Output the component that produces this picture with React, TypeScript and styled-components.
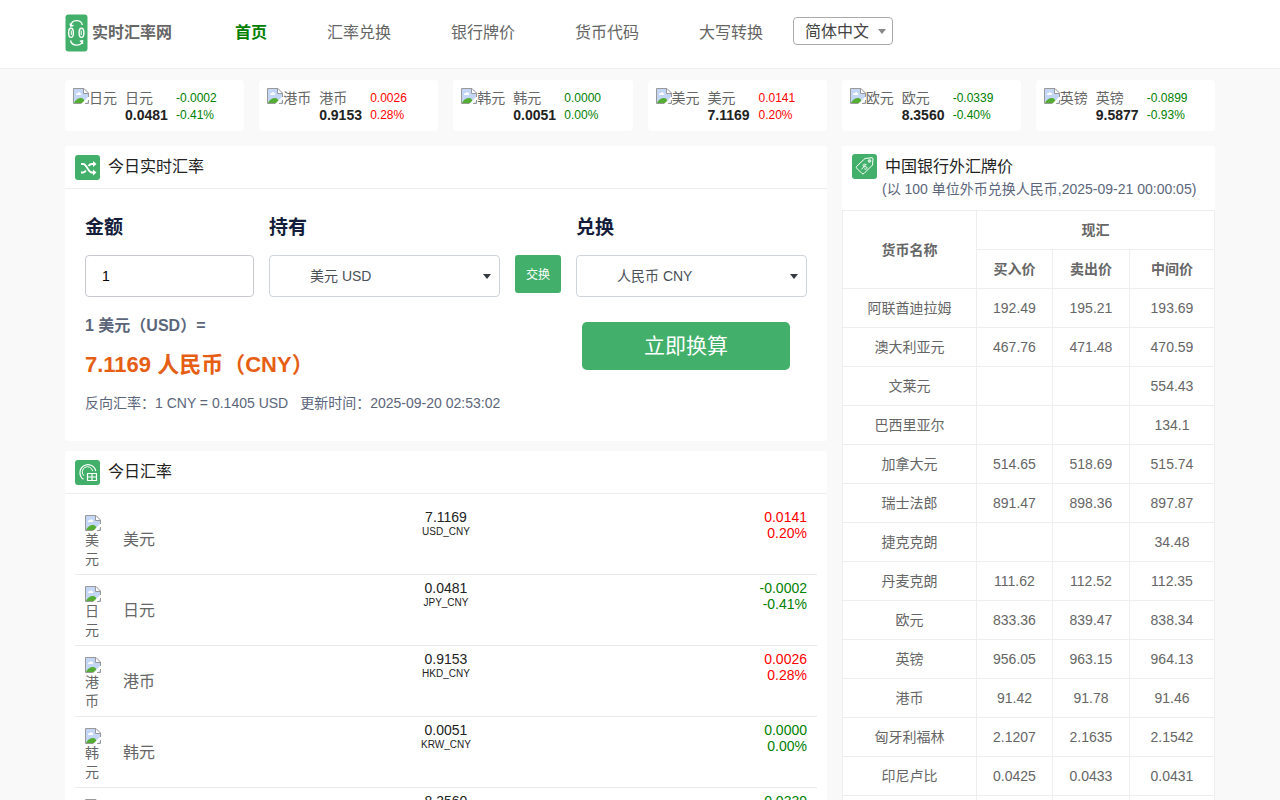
import React from "react";
import styled, { createGlobalStyle } from "styled-components";

const GREEN = "#42b06a";

const GlobalStyle = createGlobalStyle`
  *, *::before, *::after { box-sizing: border-box; }
  html { scrollbar-width: none; }
  body {
    margin: 0;
    background: #f9f9f9;
    color: #666;
    font: 14px/20px "Liberation Sans", "Noto Sans CJK SC", sans-serif;
  }
  button, input, select { font-family: inherit; }
`;

const Container = styled.div`
  max-width: 1180px;
  margin: 0 auto;
  padding: 0 15px;
`;

const Header = styled.header`
  background: #fff;
  border-bottom: 1px solid #eee;
`;

const HeaderRow = styled(Container)`
  display: flex;
  align-items: center;
  height: 68px;
  padding-bottom: 6px;
`;

const Logo = styled.a`
  display: flex;
  align-items: center;
  gap: 4px;
  width: 140px;
  padding-top: 4px;
  color: #666;
  font-size: 16px;
  font-weight: 700;
  text-decoration: none;
  white-space: nowrap;
`;

const Nav = styled.nav`
  display: flex;
  gap: 60px;
  padding: 4px 30px 0;
`;

const NavLink = styled.a<{ $active?: boolean }>`
  color: ${(p) => (p.$active ? "green" : "#666")};
  font-size: 16px;
  font-weight: ${(p) => (p.$active ? 700 : 400)};
  line-height: 24px;
  text-decoration: none;
  white-space: nowrap;
`;

const SelectWrap = styled.div<{ $inset: number; $color: string }>`
  position: relative;
  &::after {
    content: "";
    position: absolute;
    top: calc(50% - 2px);
    right: ${(p) => p.$inset}px;
    border: 4px solid transparent;
    border-top: 5px solid ${(p) => p.$color};
    border-bottom: 0;
    pointer-events: none;
  }
`;

const LanguageSelect = styled.select`
  display: block;
  appearance: none;
  width: 100px;
  height: 28px;
  padding: 0 20px 0 11px;
  border: 1px solid #aaa;
  border-radius: 4px;
  background: #fff;
  color: #444;
  font-size: 16px;
`;

const Tickers = styled.section`
  display: grid;
  grid-template-columns: repeat(6, minmax(0, 1fr));
  gap: 15px;
  margin: 11px 0 15px;
`;

const Ticker = styled.article`
  display: flex;
  align-items: flex-start;
  padding: 8px 8px 7px;
  border-radius: 4px;
  background: #fff;
  line-height: 17px;
  white-space: nowrap;
`;

const TickerFlag = styled.div`
  display: flex;
  width: 52px;
  line-height: 20px;
`;

const TickerRate = styled.div`
  display: grid;
  width: 51px;
  padding-top: 2px;
  strong { color: #222; }
`;

const Change = styled.div<{ $up: boolean; $small?: boolean }>`
  display: grid;
  padding-top: ${(p) => (p.$small ? 2 : 0)}px;
  color: ${(p) => (p.$up ? "red" : "green")};
  font-size: ${(p) => (p.$small ? 12 : 14)}px;
  line-height: ${(p) => (p.$small ? 17 : 16)}px;
  text-align: ${(p) => (p.$small ? "left" : "right")};
`;

const Columns = styled.main`
  display: grid;
  grid-template-columns: minmax(0, 1fr) 373px;
  gap: 15px;
  align-items: start;
`;

const MainColumn = styled.div`
  display: grid;
  gap: 10px;
`;

const Panel = styled.section`
  border-radius: 3px;
  background: #fff;
`;

const PanelHead = styled.header<{ $line?: boolean }>`
  display: flex;
  align-items: center;
  gap: 8px;
  height: ${(p) => (p.$line ? 43 : 41)}px;
  padding: 0 10px;
  border-bottom: ${(p) => (p.$line ? "1px solid #eee" : "0")};
`;

const PanelIcon = styled.span`
  display: flex;
  width: 25px;
  height: 25px;
  border-radius: 3px;
  background: ${GREEN};
`;

const PanelTitle = styled.h2`
  margin: 0;
  color: #222;
  font-size: 16px;
  font-weight: 400;
`;

const Form = styled.form`
  padding: 24px 20px 28px;
`;

const Fields = styled.div`
  display: grid;
  grid-template-columns: minmax(0, 169fr) minmax(0, 231fr) 46px minmax(0, 231fr);
  gap: 15px;
`;

const Field = styled.div`
  display: grid;
  gap: 12px;
`;

const Label = styled.label`
  color: #141e3a;
  font-size: 19px;
  font-weight: 700;
  line-height: 30px;
`;

const AmountInput = styled.input`
  width: 100%;
  height: 42px;
  padding: 0 16px;
  border: 1px solid #c8c8d2;
  border-radius: 4px;
  background: #fff;
  color: #000;
  font-size: 14px;
`;

const CurrencySelect = styled.select`
  display: block;
  appearance: none;
  width: 100%;
  height: 42px;
  padding: 0 24px 0 40px;
  border: 1px solid #ced4da;
  border-radius: 4px;
  background: #fff;
  color: #495057;
  font-size: 14px;
`;

const SwapButton = styled.button`
  height: 38px;
  margin-top: 42px;
  padding: 0 0 2px;
  border: 0;
  border-radius: 3px;
  background: ${GREEN};
  color: #fff;
  font-size: 12px;
`;

const ResultRow = styled.div`
  display: grid;
  grid-template-columns: minmax(0, 491fr) minmax(0, 231fr);
  align-items: start;
  padding-top: 17px;
  color: #5c667b;
`;

const Result = styled.div`
  white-space: nowrap;
  p { margin: 0; }
`;

const ResultFrom = styled.p`
  font-size: 16px;
  font-weight: 700;
  line-height: 24px;
`;

const ResultTo = styled.p`
  padding: 12px 0;
  color: #e55e14;
  font-size: 22px;
  font-weight: 700;
  line-height: 30px;
`;

const ResultNote = styled.div`
  display: flex;
  gap: 12px;
  padding-top: 1px;
`;

const ConvertButton = styled.button`
  width: 90%;
  height: 48px;
  margin: 8px 6px 0;
  padding: 0 0 4px;
  border: 0;
  border-radius: 5px;
  background: ${GREEN};
  color: #fff;
  font-size: 21px;
`;

const RateList = styled.ul`
  margin: 0;
  padding: 10px;
  list-style: none;
`;

const RateItem = styled.li`
  display: grid;
  grid-template-columns: 1fr 1fr 1fr;
  height: 71px;
  padding: 5px 10px 0;
  border-bottom: 1px solid #eaeaea;
`;

const Currency = styled.div`
  display: flex;
  gap: 22px;
  font-size: 16px;
  line-height: 62px;
`;

const NarrowFlag = styled.div`
  width: 16px;
  padding-top: 6px;
  font-size: 14px;
  line-height: 19px;
`;

const Rate = styled.div`
  display: grid;
  align-content: start;
  color: #222;
  line-height: 16px;
  text-align: center;
  small {
    font-size: 10px;
    line-height: 14px;
  }
`;

const Subtitle = styled.p`
  margin: 0;
  padding: 0 10px 11px 40px;
  height: 23px;
  color: #5c667b;
  line-height: 4px;
  white-space: nowrap;
`;

const BankTable = styled.table`
  width: 100%;
  border-collapse: collapse;
  table-layout: fixed;
  text-align: center;
  th, td {
    height: 39px;
    padding: 0;
    border: 1px solid #eee;
  }
`;

const BuyCol = styled.col`width: 76px;`;
const SellCol = styled.col`width: 77px;`;
const MidCol = styled.col`width: 85px;`;

const IconSvg = styled.svg`
  display: block;
  flex: none;
`;

function MissingImage() {
  return (
    <IconSvg width="16" height="16" viewBox="0 0 16 16" fill="none" aria-hidden="true">
      <path d="M1 1h10l4 4v10H1z" fill="#c3d6f6" />
      <path d="M3 6.500c0-1 .9-1.500 1.700-1.200.6-1.600 2.500-1.300 2.800 0 1 0 1.200 1.400.2 1.700H3.500z" fill="#fff" />
      <path d="M1 15c1-3 4-5 7-5 2.200 0 3.500 1.500 4 5z" fill="#55ad35" />
      <path d="M8 16l8-8v4l-4 4z" fill="#fff" />
      <path d="M10.500 1v4.500H15z" fill="#fff" />
      <path d="M8.500 15.500h-8V.500h10.500l4.500 4.500v4M15.500 12v3.500H12M10.500.500v5h5" stroke="#999" />
    </IconSvg>
  );
}

function LogoMark() {
  return (
    <IconSvg width="23" height="38" viewBox="0 0 23 38" fill="none" stroke="#fff" strokeWidth="1.400" aria-hidden="true">
      <rect x="0.500" y="0.500" width="22" height="37" rx="3" fill={GREEN} stroke="none" />
      <ellipse cx="6" cy="18.800" rx="2.400" ry="4.600" />
      <ellipse cx="16.500" cy="18.800" rx="2.400" ry="4.600" />
      <path d="M6.300 16.500v4.500M16.200 16.500v4.500" strokeWidth="1" />
      <path d="M6 12c0-7 10.500-7 11.300-1M5 9.500l.8 2.700 2.700-.8" />
      <path d="M5.500 26.500c1.500 6 10 6 11.800 1M17.500 30v-3.200l-2.700.500" />
    </IconSvg>
  );
}

function ShuffleIcon() {
  return (
    <IconSvg width="25" height="25" viewBox="0 0 25 25" fill="none" stroke="#fff" strokeWidth="1.800" aria-hidden="true">
      <path d="M6 9h2.200c3.800 0 4.800 8.500 8.600 8.500h1.700M6 17.500h2.200c1.200 0 2-.8 2.700-1.900M13.500 11c.8-1.200 1.800-2 3.300-2h1.700" />
      <path d="M18 6l3.500 3-3.500 3zM18 14.500l3.500 3-3.500 3z" fill="#fff" stroke="none" />
    </IconSvg>
  );
}

function CoinTableIcon() {
  return (
    <IconSvg width="25" height="25" viewBox="0 0 25 25" fill="none" stroke="#fff" aria-hidden="true">
      <path d="M8.500 19.300a8 8 0 1 1 12.300-8.300" strokeWidth="1.200" />
      <path d="M9 15.800a5.200 5.200 0 1 1 8.600-4.700" strokeWidth="1" />
      <path d="M12.500 13.500h9v7h-9zM12.500 17h9M17 13.500v7" strokeWidth="1.200" />
    </IconSvg>
  );
}

function PriceTagIcon() {
  return (
    <IconSvg width="25" height="25" viewBox="0 0 25 25" fill="none" stroke="#fff" aria-hidden="true">
      <path d="M4.500 12.500L13 4.500l7-.8 1 .8-.500 6.500-8.500 8.500q-1 .8-2 0l-5.500-5.500q-.6-.8 0-1.500z" strokeWidth="1" />
      <circle cx="17.500" cy="7" r="1.400" fill="#fff" fillOpacity=".7" strokeWidth=".6" />
      <path d="M13.800 10.700c-1.500-1.500-3.600.2-2.300 1.700 1.300 1 2.200-.4 3.200.6 1.200 1.400-1 3.200-2.400 1.700M9.500 15.300l5-5.500" strokeWidth="1" />
    </IconSvg>
  );
}

const NAV = ["首页", "汇率兑换", "银行牌价", "货币代码", "大写转换"];

interface Quote {
  name: string;
  code: string;
  rate: string;
  diff: string;
  percent: string;
  up?: boolean;
}

const USD: Quote = { name: "美元", code: "USD", rate: "7.1169", diff: "0.0141", percent: "0.20%", up: true };
const JPY: Quote = { name: "日元", code: "JPY", rate: "0.0481", diff: "-0.0002", percent: "-0.41%" };
const HKD: Quote = { name: "港币", code: "HKD", rate: "0.9153", diff: "0.0026", percent: "0.28%", up: true };
const KRW: Quote = { name: "韩元", code: "KRW", rate: "0.0051", diff: "0.0000", percent: "0.00%" };
const EUR: Quote = { name: "欧元", code: "EUR", rate: "8.3560", diff: "-0.0339", percent: "-0.40%" };
const GBP: Quote = { name: "英镑", code: "GBP", rate: "9.5877", diff: "-0.0899", percent: "-0.93%" };

const TICKERS = [JPY, HKD, KRW, USD, EUR, GBP];
const RATES = [USD, JPY, HKD, KRW, EUR];

const BANK: string[][] = [
  ["阿联酋迪拉姆", "192.49", "195.21", "193.69"],
  ["澳大利亚元", "467.76", "471.48", "470.59"],
  ["文莱元", "", "", "554.43"],
  ["巴西里亚尔", "", "", "134.1"],
  ["加拿大元", "514.65", "518.69", "515.74"],
  ["瑞士法郎", "891.47", "898.36", "897.87"],
  ["捷克克朗", "", "", "34.48"],
  ["丹麦克朗", "111.62", "112.52", "112.35"],
  ["欧元", "833.36", "839.47", "838.34"],
  ["英镑", "956.05", "963.15", "964.13"],
  ["港币", "91.42", "91.78", "91.46"],
  ["匈牙利福林", "2.1207", "2.1635", "2.1542"],
  ["印尼卢比", "0.0425", "0.0433", "0.0431"],
  ["", "", "", ""],
];

export default function App() {
  return (
    <>
      <GlobalStyle />
      <Header>
        <HeaderRow>
          <Logo href="#">
            <LogoMark />
            实时汇率网
          </Logo>
          <Nav>
            {NAV.map((item, i) => (
              <NavLink key={item} href="#" $active={i === 0}>
                {item}
              </NavLink>
            ))}
          </Nav>
          <SelectWrap $inset={7} $color="#888">
            <LanguageSelect aria-label="语言">
              <option>简体中文</option>
            </LanguageSelect>
          </SelectWrap>
        </HeaderRow>
      </Header>
      <Container>
        <Tickers>
          {TICKERS.map((q) => (
            <Ticker key={q.code}>
              <TickerFlag>
                <MissingImage />
                {q.name}
              </TickerFlag>
              <TickerRate>
                <span>{q.name}</span>
                <strong>{q.rate}</strong>
              </TickerRate>
              <Change $up={!!q.up} $small>
                <span>{q.diff}</span>
                <span>{q.percent}</span>
              </Change>
            </Ticker>
          ))}
        </Tickers>
        <Columns>
          <MainColumn>
            <Panel>
              <PanelHead $line>
                <PanelIcon>
                  <ShuffleIcon />
                </PanelIcon>
                <PanelTitle>今日实时汇率</PanelTitle>
              </PanelHead>
              <Form onSubmit={(e) => e.preventDefault()}>
                <Fields>
                  <Field>
                    <Label htmlFor="amount">金额</Label>
                    <AmountInput id="amount" type="text" defaultValue="1" />
                  </Field>
                  <Field>
                    <Label htmlFor="from">持有</Label>
                    <SelectWrap $inset={9} $color="#343a40">
                      <CurrencySelect id="from">
                        <option>美元 USD</option>
                      </CurrencySelect>
                    </SelectWrap>
                  </Field>
                  <SwapButton type="button">交换</SwapButton>
                  <Field>
                    <Label htmlFor="to">兑换</Label>
                    <SelectWrap $inset={9} $color="#343a40">
                      <CurrencySelect id="to">
                        <option>人民币 CNY</option>
                      </CurrencySelect>
                    </SelectWrap>
                  </Field>
                </Fields>
                <ResultRow>
                  <Result>
                    <ResultFrom>1 美元（USD）=</ResultFrom>
                    <ResultTo>7.1169 人民币（CNY）</ResultTo>
                    <ResultNote>
                      <span>反向汇率：1 CNY = 0.1405 USD</span>
                      <span>更新时间：2025-09-20 02:53:02</span>
                    </ResultNote>
                  </Result>
                  <ConvertButton type="submit">立即换算</ConvertButton>
                </ResultRow>
              </Form>
            </Panel>
            <Panel>
              <PanelHead $line>
                <PanelIcon>
                  <CoinTableIcon />
                </PanelIcon>
                <PanelTitle>今日汇率</PanelTitle>
              </PanelHead>
              <RateList>
                {RATES.map((q) => (
                  <RateItem key={q.code}>
                    <Currency>
                      <NarrowFlag>
                        <MissingImage />
                        {q.name}
                      </NarrowFlag>
                      <span>{q.name}</span>
                    </Currency>
                    <Rate>
                      <span>{q.rate}</span>
                      <small>{q.code}_CNY</small>
                    </Rate>
                    <div>
                      <Change $up={!!q.up}>
                        <span>{q.diff}</span>
                        <span>{q.percent}</span>
                      </Change>
                    </div>
                  </RateItem>
                ))}
              </RateList>
            </Panel>
          </MainColumn>
          <Panel>
            <PanelHead>
              <PanelIcon>
                <PriceTagIcon />
              </PanelIcon>
              <PanelTitle>中国银行外汇牌价</PanelTitle>
            </PanelHead>
            <Subtitle>(以 100 单位外币兑换人民币,2025-09-21 00:00:05)</Subtitle>
            <BankTable>
              <colgroup>
                <col />
                <BuyCol />
                <SellCol />
                <MidCol />
              </colgroup>
              <thead>
                <tr>
                  <th rowSpan={2}>货币名称</th>
                  <th colSpan={3}>现汇</th>
                </tr>
                <tr>
                  <th>买入价</th>
                  <th>卖出价</th>
                  <th>中间价</th>
                </tr>
              </thead>
              <tbody>
                {BANK.map((row, i) => (
                  <tr key={i}>
                    {row.map((cell, j) => (
                      <td key={j}>{cell}</td>
                    ))}
                  </tr>
                ))}
              </tbody>
            </BankTable>
          </Panel>
        </Columns>
      </Container>
    </>
  );
}
